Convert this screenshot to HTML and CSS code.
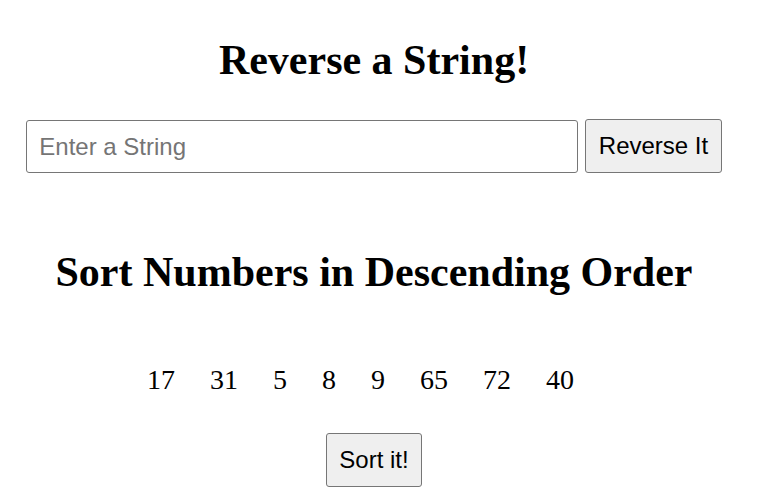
FILE: index.html
```html
<!DOCTYPE html>
<html lang="en">
<head>
<meta charset="utf-8">
<title>Reverse and Sort</title>
<link rel="stylesheet" href="styles.css">
</head>
<body>
<main class="app">
  <section class="reverse">
    <h1 class="title">Reverse a String!</h1>
    <div class="row">
      <input class="text-input" type="text" placeholder="Enter a String">
      <button class="btn" type="button">Reverse It</button>
    </div>
  </section>
  <section class="sort">
    <h1 class="title title-sort">Sort Numbers in Descending Order</h1>
    <div class="numbers">
      <span class="num">17</span>
      <span class="num">31</span>
      <span class="num">5</span>
      <span class="num">8</span>
      <span class="num">9</span>
      <span class="num">65</span>
      <span class="num">72</span>
      <span class="num">40</span>
    </div>
    <div class="actions">
      <button class="btn" type="button">Sort it!</button>
    </div>
  </section>
</main>
</body>
</html>
```
FILE: styles.css
```css
html, body {
  margin: 0;
  padding: 0;
  background: #ffffff;
  color: #000000;
}

body {
  font-family: "Liberation Serif", "Times New Roman", serif;
}

.app {
  width: 748px;
  text-align: center;
}

.title {
  margin: 36px 0 0;
  font-size: 42px;
  line-height: 48px;
  font-weight: bold;
}

.title-sort {
  margin-top: 75px;
}

.row {
  margin-top: 35px;
  display: flex;
  justify-content: center;
  align-items: flex-end;
  gap: 7px;
}

.text-input {
  box-sizing: border-box;
  width: 552px;
  height: 53px;
  margin: 0;
  padding: 0 12px;
  border: 1px solid #767676;
  border-radius: 3px;
  font-family: "Liberation Sans", Arial, sans-serif;
  font-size: 24px;
  color: #000;
  background: #fff;
}

.text-input::placeholder {
  color: #757575;
}

.btn {
  box-sizing: border-box;
  margin: 0;
  padding: 12px 12.5px;
  border: 1px solid #767676;
  border-radius: 3px;
  background: #efefef;
  color: #000;
  font-family: "Liberation Sans", Arial, sans-serif;
  font-size: 24px;
  line-height: 28px;
  height: 54px;
}

.numbers {
  margin-top: 68px;
  display: flex;
  justify-content: center;
  gap: 35px;
  padding-right: 27px;
  font-size: 28px;
  line-height: 32px;
}

.actions {
  margin-top: 37px;
  display: flex;
  justify-content: center;
}
```
